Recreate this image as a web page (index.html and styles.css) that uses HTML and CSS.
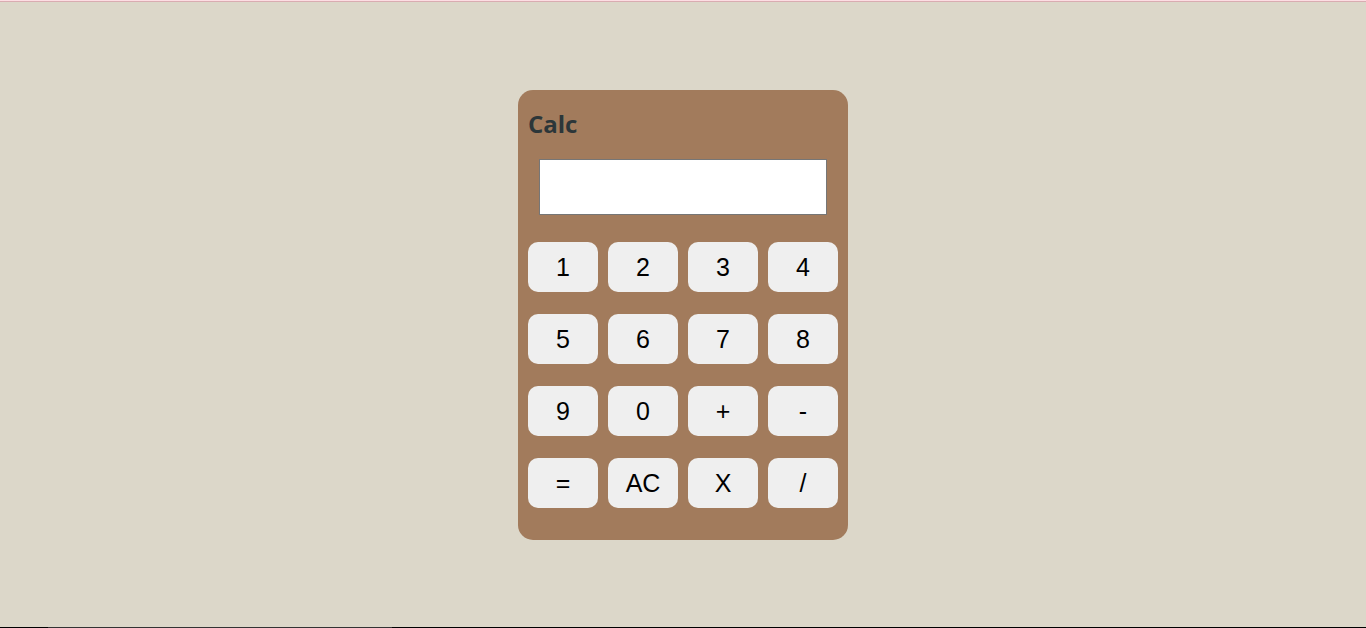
FILE: index.html
```
<!DOCTYPE html>
<html lang="en">
<head>
<meta charset="utf-8">
<title>Calc</title>
<link rel="stylesheet" href="styles.css">
</head>
<body>
<div class="top-line"></div>
<main class="calculator">
  <h1 class="title">Calc</h1>
  <input class="display" type="text" aria-label="Display">
  <div class="keys">
    <button type="button" class="key">1</button>
    <button type="button" class="key">2</button>
    <button type="button" class="key">3</button>
    <button type="button" class="key">4</button>
    <button type="button" class="key">5</button>
    <button type="button" class="key">6</button>
    <button type="button" class="key">7</button>
    <button type="button" class="key">8</button>
    <button type="button" class="key">9</button>
    <button type="button" class="key">0</button>
    <button type="button" class="key">+</button>
    <button type="button" class="key">-</button>
    <button type="button" class="key">=</button>
    <button type="button" class="key">AC</button>
    <button type="button" class="key">X</button>
    <button type="button" class="key">/</button>
  </div>
</main>
<div class="bottom-line"></div>
</body>
</html>
```
FILE: styles.css
```
* {
  box-sizing: border-box;
}

body {
  display: flex;
  flex-direction: column;
  align-items: center;
  justify-content: space-between;
  min-height: 100vh;
  margin: 0;
  background: #dcd7c9;
}

.top-line {
  width: 100%;
  height: 2px;
  margin-bottom: 1px;
  border-bottom: 1px solid #d9acb1;
  background: #fddde3;
}

.bottom-line {
  width: 100%;
  height: 1px;
  background: linear-gradient(to right, #000 48px, #333 48px, #333 392px, #000 392px);
}

.calculator {
  display: flex;
  flex-direction: column;
  width: 330px;
  padding: 16px 10px 32px;
  border-radius: 15px;
  background: #a27b5c;
}

.title {
  margin: 0;
  color: #2c3639;
  font: bold 24px/36px "Open Sans", "Noto Sans", sans-serif;
}

.display {
  height: 56px;
  margin: 17px 11px 27px;
  padding: 0 8px;
  border: 1px solid #767676;
  background: #fff;
  font: 25px "Liberation Sans", Arial, sans-serif;
}

.keys {
  display: grid;
  grid-template-columns: repeat(4, 1fr);
  gap: 22px 10px;
}

.key {
  height: 50px;
  padding: 0;
  border: 0;
  border-radius: 10px;
  background: #efefef;
  color: #000;
  font: 25px "Liberation Sans", Arial, sans-serif;
}
```
